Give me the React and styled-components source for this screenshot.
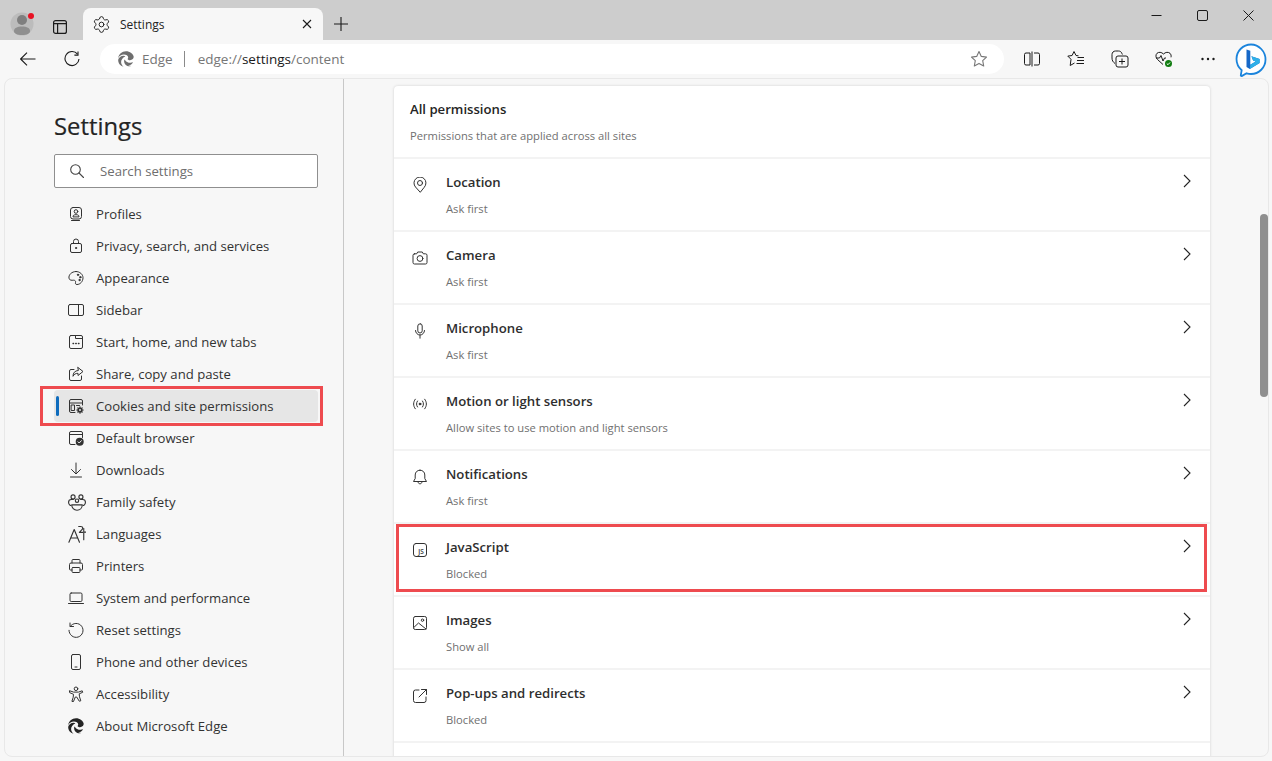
import React from 'react';
import styled, { createGlobalStyle } from 'styled-components';
import { Settings } from 'lucide-react';

const GlobalStyle = createGlobalStyle`
  html, body {
    margin: 0;
    height: 100%;
    background: #f7f7f7;
    overflow: hidden;
  }
  body {
    font-family: "Open Sans", "Noto Sans", sans-serif;
    color: #242424;
  }
  * { box-sizing: border-box; }
`;

const Svg = ({ size = 16, box = 16, sw = 1, children }) => (
  <svg width={size} height={size} viewBox={`0 0 ${box} ${box}`} fill="none" stroke="currentColor" strokeWidth={sw} strokeLinecap="round" strokeLinejoin="round">
    {children}
  </svg>
);

const EdgeLogo = ({ color, size = 16 }) => (
  <svg width={size} height={size} viewBox="0 0 16 16">
    <path fill={color} d="M8 0.3C3.9 0.3 0.6 3.3 0.2 7.2 1.2 4.9 3.5 3.6 5.9 3.6c2.2 0 4.3 1.2 4.3 3 0 .5-.2.9-.5 1.2-.3.3-.1.8.9 1.1 1.4.5 3.2.2 4.2-.8.6-.7.9-1.5.9-2.3C15.4 2.8 11.8 0.3 8 0.3z" />
    <path fill={color} d="M5.7 4.7C3 4.7.6 6.6.2 8.8c-.2 3.2 2 6.2 5.3 6.9-1.5-1.1-2.4-2.9-2.4-4.7 0-2.6 1.9-4.8 4.3-5.6C6.9 5 6.3 4.7 5.7 4.7z" />
    <path fill={color} d="M6.5 8.6c-.9 1.7-.3 4 1.3 5.3 1.3 1.1 3.5 1.7 5.2 1-1-.1-2.2-.4-2.9-.9 1.8.2 3.3-.4 4.3-1.8.3-.4.5-.8.3-1-.2-.1-.5.1-1 .2-2 .6-4.5.2-6-1.5-.5-.6-.8-1.2-1.200-1.3z" />
  </svg>
);

const icons = {
  profiles: <Svg><rect x="2.5" y="1.5" width="11" height="11.5" rx="2.5" /><circle cx="8" cy="5.5" r="1.8" /><path d="M5 10.500c0-1.300 1-1.800 3-1.800s3 .5 3 1.800z" /><path d="M3.500 14.500h8" /></Svg>,
  privacy: <Svg><rect x="2.5" y="5.5" width="11" height="9" rx="1.5" /><path d="M5.500 5.500V3.500a2.500 2.500 0 0 1 5 0v2" /><circle cx="8" cy="10" r=".6" fill="currentColor" /></Svg>,
  appearance: <Svg><path d="M8 1.500c3.800 0 7 2.800 7 6.300 0 3.600-2.800 6.700-6 6.700-1.500 0-1.800-1-1.500-2 .4-1.200-.3-2.400-2-2.300-1.700.1-4 .4-4.500-2C.4 5 3.500 1.500 8 1.500z" /><circle cx="10" cy="4.8" r=".7" fill="currentColor" /><circle cx="12.3" cy="7.2" r=".7" fill="currentColor" /><circle cx="11.5" cy="10" r=".7" fill="currentColor" /></Svg>,
  sidebar: <Svg><rect x=".5" y="2.5" width="15" height="11" rx="1.5" /><path d="M10.500 2.500v11" /></Svg>,
  start: <Svg><path d="M3 1.500h4.500v3h7V13a1.500 1.500 0 0 1-1.500 1.500H3A1.500 1.500 0 0 1 1.500 13V3A1.500 1.500 0 0 1 3 1.500zM7.500 1.500H13A1.500 1.500 0 0 1 14.500 3v1.500" /><path d="M5 9.500h.6M7.700 9.500h.6M10.400 9.500h.6" strokeWidth="1.3" /></Svg>,
  share: <Svg><path d="M13.500 10v3a1.500 1.500 0 0 1-1.500 1.500H3A1.500 1.500 0 0 1 1.500 13V5A1.500 1.500 0 0 1 3 3.500h3" /><path d="M10 1.500l5 4-5 4V7.300c-2.500 0-4 1-5 3 0-3.500 1.800-5.500 5-5.800z" /></Svg>,
  cookies: <Svg><path d="M7 14.500H3A1.500 1.500 0 0 1 1.500 13V3A1.500 1.500 0 0 1 3 1.500h10A1.500 1.500 0 0 1 14.500 3v4" /><path d="M1.500 5h13" /><rect x="3.5" y="7" width="3" height="5.5" /><path d="M8.500 7.500h3" /><circle cx="12" cy="12" r="2.6" fill="currentColor" stroke="none" /><circle cx="12" cy="12" r="1" fill="#e6e6e6" stroke="none" /><path d="M12 8.800v1M12 14.200v1M8.800 12h1M14.200 12h1M9.800 9.800l.7.700M13.500 13.500l.7.700M9.800 14.200l.7-.7M13.500 10.500l.7-.7" strokeWidth="1.2" /></Svg>,
  browser: <Svg><path d="M7 14.500H3A1.500 1.500 0 0 1 1.500 13V3A1.500 1.500 0 0 1 3 1.500h10A1.500 1.500 0 0 1 14.500 3v4.500" /><path d="M1.500 4.500h13" /><circle cx="11.7" cy="11.7" r="4" fill="currentColor" stroke="none" /><path d="M10 11.800l1.200 1.200 2.200-2.300" stroke="#f7f7f7" /></Svg>,
  downloads: <Svg><path d="M8 1v10.500M3.500 7.500L8 12l4.500-4.500M2.500 15h11" /></Svg>,
  family: <Svg size={18}><circle cx="4.5" cy="3.5" r="1.8" /><circle cx="11.5" cy="3.5" r="1.8" /><circle cx="8" cy="6.8" r="1.5" /><path d="M2.500 11H1.800C1 10.500.5 9.500.5 8.300c0-1.500 1-2.500 2.500-2.500h1.800M13.500 11h.7c.8-.5 1.300-1.500 1.300-2.700 0-1.500-1-2.500-2.500-2.500h-1.800" /><path d="M3.300 10.500h9.400c0 2.700-2 4.800-4.700 4.800S3.300 13.200 3.300 10.500z" /></Svg>,
  languages: <Svg size={18}><path d="M.8 15.300L5.500 4l4.700 11.300M2.500 11.500h6" /><path d="M9.500 1.300h1.800c1.200 0 1.800.6 1.800 1.500s-1.200 1.700-3 3.700h3" /><path d="M14 3v10M14 6.300h2" /></Svg>,
  printers: <Svg><path d="M4 5V2.500A1 1 0 0 1 5 1.500h6a1 1 0 0 1 1 1V5" /><path d="M4 12H2.500a1 1 0 0 1-1-1V6.500A1.500 1.500 0 0 1 3 5h10a1.500 1.500 0 0 1 1.500 1.500V11a1 1 0 0 1-1 1H12" /><rect x="4" y="9.5" width="8" height="5" rx="1" /></Svg>,
  system: <Svg><rect x="2" y="3" width="12" height="8.5" rx="1.2" /><path d="M.5 13.500h15" /></Svg>,
  reset: <Svg><path d="M2.300 4.300a7 7 0 1 1-1.300 4" /><path d="M2 1v3.500h3.500" /></Svg>,
  phone: <Svg><rect x="3.5" y=".5" width="9" height="15" rx="1.5" /><path d="M7 13h2" /></Svg>,
  accessibility: <Svg><circle cx="8" cy="2.8" r="1.8" /><path d="M1.800 4.800l3.800 1.300h4.800l3.800-1.300.5 1.500-3.500 1.500.3 3 1.300 4-1.500.4L8.700 11H7.300l-1.900 4.700-1.500-.4 1.300-4 .3-3-3.500-1.500z" /></Svg>,
  location: <Svg><path d="M8 15l-4.500-5A6 6 0 1 1 12.500 10z" /><circle cx="8" cy="6" r="2.5" /></Svg>,
  camera: <Svg><path d="M2.500 3.800h2.200l1-1.800h4.600l1 1.800h2.200A1.500 1.500 0 0 1 15 5.300v7.200a1.500 1.500 0 0 1-1.500 1.500h-11A1.500 1.500 0 0 1 1 12.500V5.300a1.500 1.500 0 0 1 1.500-1.500z" /><circle cx="8" cy="8.5" r="2.9" /></Svg>,
  microphone: <Svg><rect x="5.8" y=".8" width="4.4" height="9.2" rx="2.2" /><path d="M3.500 7.500a4.500 4.500 0 0 0 9 0M8 12v3.200" /></Svg>,
  motion: <Svg><circle cx="8" cy="8" r=".9" fill="currentColor" /><path d="M5.500 5c-1.300 1.800-1.300 4.200 0 6M10.500 5c1.300 1.800 1.300 4.200 0 6M3.300 3.200c-2.300 3-2.300 6.600 0 9.600M12.700 3.200c2.300 3 2.300 6.600 0 9.600" /></Svg>,
  notifications: <Svg><path d="M8 1.200c-2.900 0-4.800 2-4.800 4.800v3.500L1.500 12.500h13l-1.700-3V6c0-2.800-1.900-4.800-4.800-4.800z" /><path d="M6 12.700c0 1.300.9 2.100 2 2.100s2-.8 2-2.100" /></Svg>,
  images: <Svg><rect x="1.5" y="1.5" width="13" height="13" rx="1.8" /><circle cx="10.5" cy="5.2" r="1.2" /><path d="M1.800 12.500L6.500 8l7.500 6" /></Svg>,
  popups: <Svg><path d="M7 2H3.500A2 2 0 0 0 1.500 4v8.500a2 2 0 0 0 2 2H12a2 2 0 0 0 2-2V9" /><path d="M9.500 1.500h5v5M14.500 1.500L7 9" /></Svg>,
};

const navItems = [
  ['profiles', 'Profiles'],
  ['privacy', 'Privacy, search, and services'],
  ['appearance', 'Appearance'],
  ['sidebar', 'Sidebar'],
  ['start', 'Start, home, and new tabs'],
  ['share', 'Share, copy and paste'],
  ['cookies', 'Cookies and site permissions'],
  ['browser', 'Default browser'],
  ['downloads', 'Downloads'],
  ['family', 'Family safety'],
  ['languages', 'Languages'],
  ['printers', 'Printers'],
  ['system', 'System and performance'],
  ['reset', 'Reset settings'],
  ['phone', 'Phone and other devices'],
  ['accessibility', 'Accessibility'],
  ['edge', 'About Microsoft Edge'],
];

const permissions = [
  ['location', 'Location', 'Ask first'],
  ['camera', 'Camera', 'Ask first'],
  ['microphone', 'Microphone', 'Ask first'],
  ['motion', 'Motion or light sensors', 'Allow sites to use motion and light sensors'],
  ['notifications', 'Notifications', 'Ask first'],
  ['js', 'JavaScript', 'Blocked'],
  ['images', 'Images', 'Show all'],
  ['popups', 'Pop-ups and redirects', 'Blocked'],
];

const App = () => (
  <Page>
    <GlobalStyle />
    <TitleBar>
      <Profile>
        <svg width="24" height="26" viewBox="0 0 24 26">
          <circle cx="12" cy="14" r="11.5" fill="#bcbcbc" />
          <circle cx="12" cy="10" r="5" fill="#7f7f7f" />
          <path d="M4 21c0-3 3-4.500 8-4.500s8 1.500 8 4.500c0 2.500-3 4-8 4s-8-1.500-8-4z" fill="#8f8f8f" />
          <circle cx="21" cy="6" r="3" fill="#e81123" />
        </svg>
      </Profile>
      <TabActions>
        <svg width="14" height="14" viewBox="0 0 14 14" fill="none" stroke="#1a1a1a" strokeWidth="1.2">
          <rect x=".6" y=".6" width="12.8" height="12.8" rx="2" />
          <path d="M.6 3.600h12.800M4.600 3.600v9.800" />
        </svg>
      </TabActions>
      <Tab>
        <TabIcon>
          <Settings size={19} strokeWidth={1.25} color="#242424" />
        </TabIcon>
        <TabTitle>Settings</TabTitle>
        <svg width="10" height="10" viewBox="0 0 10 10" stroke="#1a1a1a" strokeWidth="1.1">
          <path d="M1 1l8 8M9 1l-8 8" />
        </svg>
      </Tab>
      <NewTab>
        <svg width="14" height="14" viewBox="0 0 14 14" stroke="#1a1a1a" strokeWidth="1.1">
          <path d="M7 0v14M0 7h14" />
        </svg>
      </NewTab>
      <WindowControls>
        <WindowButton>
          <svg width="11" height="11" viewBox="0 0 11 11" stroke="#1a1a1a"><path d="M.5 5.500h10" /></svg>
        </WindowButton>
        <WindowButton>
          <svg width="11" height="11" viewBox="0 0 11 11" fill="none" stroke="#1a1a1a"><rect x=".5" y=".5" width="10" height="10" rx="1.5" /></svg>
        </WindowButton>
        <WindowButton>
          <svg width="11" height="11" viewBox="0 0 11 11" stroke="#1a1a1a"><path d="M.5.500l10 10M10.500.500l-10 10" /></svg>
        </WindowButton>
      </WindowControls>
    </TitleBar>

    <Toolbar>
      <NavButton>
        <svg width="16" height="14" viewBox="0 0 16 14" fill="none" stroke="#1a1a1a" strokeWidth="1.1">
          <path d="M.5 7h15M7 .6L.6 7 7 13.400" />
        </svg>
      </NavButton>
      <NavButton>
        <svg width="16" height="16" viewBox="0 0 16 16" fill="none" stroke="#1a1a1a" strokeWidth="1.1">
          <path d="M13.500 3.200A7 7 0 1 0 15 8" />
          <path d="M14 .5v3.600h-3.600" />
        </svg>
      </NavButton>
      <Address>
        <EdgeLogo color="#6e6e6e" />
        <AddressLabel>Edge</AddressLabel>
        <AddressDivider />
        <Url>edge://<strong>settings</strong>/content</Url>
        <AddressStar>
          <svg width="18" height="18" viewBox="0 0 18 18" fill="none" stroke="#777" strokeWidth="1.1" strokeLinejoin="round">
            <path d="M9 1.500l2.300 4.900 5.200.7-3.800 3.600 1 5.300L9 13.400 4.300 16l1-5.300L1.500 7.100l5.200-.7z" />
          </svg>
        </AddressStar>
      </Address>
      <ToolIcons>
        <ToolButton>
          <svg width="16" height="16" viewBox="0 0 16 16" fill="none" stroke="#1a1a1a">
            <path d="M6 2H2A1.500 1.500 0 0 0 .5 3.500v9A1.500 1.500 0 0 0 2 14h4zM10 2h4a1.500 1.500 0 0 1 1.500 1.500v9A1.500 1.500 0 0 1 14 14h-4" />
            <path d="M8 .5v15" />
          </svg>
        </ToolButton>
        <ToolButton>
          <svg width="18" height="18" viewBox="0 0 18 18" fill="none" stroke="#1a1a1a" strokeLinejoin="round">
            <path d="M11.500 5.800L9 5.500 7 1.500 5.100 5.500.8 6.100 4 9.300 3.200 15.500l4.300-2.500" />
            <path d="M10.500 7.500h6.500M10 10.500h7M9.500 13.500h7.500" />
          </svg>
        </ToolButton>
        <ToolButton>
          <svg width="18" height="18" viewBox="0 0 18 18" fill="none" stroke="#1a1a1a">
            <path d="M4 13.500C2 12 1 10.500 1 8V4.500C1 2.500 2.500 1 4.500 1h3c1.500 0 2.800.8 3.300 2.200l.6 1.300" />
            <rect x="5" y="6" width="12" height="11" rx="2" fill="#f7f7f7" />
            <path d="M11 8.500v6M8 11.500h6" />
          </svg>
        </ToolButton>
        <ToolButton>
          <svg width="18" height="18" viewBox="0 0 18 18" fill="none" stroke="#1a1a1a">
            <path d="M8 14.500L2.500 9.500C.5 7.500.5 4.800 2 3.300c1.700-1.500 4.500-1.300 6.500.7 2-2 4.800-2.200 6.500-.7 1 1 1.400 2.500 1 4" />
            <path d="M1 8h3.500l1.500-2.500 2 5.500 1.500-3h1.500" />
            <circle cx="13.5" cy="13.5" r="3.5" fill="#107c10" stroke="none" />
            <path d="M11.800 13.600l1.200 1.100 2-2.200" stroke="#fff" />
          </svg>
        </ToolButton>
        <ToolButton>
          <svg width="16" height="4" viewBox="0 0 16 4" fill="#1a1a1a">
            <circle cx="2.5" cy="2" r="1.2" /><circle cx="8" cy="2" r="1.2" /><circle cx="13.5" cy="2" r="1.2" />
          </svg>
        </ToolButton>
      </ToolIcons>
      <Bing>
        <svg width="32" height="34" viewBox="0 0 32 34">
          <path d="M16 1.500C8 1.500 1.500 8 1.500 16c0 4.500 2 8.500 5.200 11.200l-.9 5c-.1.800.7 1 1.300.7l4.500-2.600c1.400.4 2.900.7 4.400.7 8 0 14.500-6.500 14.500-14.500S24 1.500 16 1.500z" fill="#fff" stroke="#1b84dc" strokeWidth="1.8" />
          <path d="M11.500 6.500l3.800 1.300v14l5.400-3.200-2.600-1.200-1.700-4.200 8.200 2.900v4l-9.800 5.800-3.300-1.900z" fill="#1668c8" />
          <path d="M15.300 21.800l5.400-3.200-2.600-1.200-1.700-4.200 8.200 2.900v4l-9.800 5.800z" fill="#2fb0e8" />
        </svg>
      </Bing>
    </Toolbar>

    <Panel>
      <Sidebar>
        <SidebarTitle>Settings</SidebarTitle>
        <SearchBox>
          <svg width="16" height="16" viewBox="0 0 16 16" fill="none" stroke="#444" strokeWidth="1.1" strokeLinecap="round">
            <circle cx="6.5" cy="6.5" r="4.8" /><path d="M10 10l4.500 4.500" />
          </svg>
          <SearchPlaceholder>Search settings</SearchPlaceholder>
        </SearchBox>
        <Nav>
          {navItems.map(([key, label]) => (
            <NavItem key={key} $active={key === 'cookies'}>
              <NavIcon>{key === 'edge' ? <EdgeLogo color="#242424" /> : icons[key]}</NavIcon>
              {label}
            </NavItem>
          ))}
        </Nav>
      </Sidebar>

      <Main>
        <Card>
          <CardHeader>
            <CardTitle>All permissions</CardTitle>
            <CardSubtitle>Permissions that are applied across all sites</CardSubtitle>
          </CardHeader>
          {permissions.map(([key, title, desc]) => (
            <Row key={key} $marked={key === 'js'}>
              <RowIcon>
                {key === 'js' ? (
                  <Svg>
                    <rect x="1.5" y="1.5" width="13" height="13" rx="2.5" />
                    <JsMark x="11.8" y="12" textAnchor="end">JS</JsMark>
                  </Svg>
                ) : icons[key]}
              </RowIcon>
              <RowText>
                <RowTitle>{title}</RowTitle>
                <RowDesc>{desc}</RowDesc>
              </RowText>
              <Chevron>
                <svg width="8" height="14" viewBox="0 0 8 14" fill="none" stroke="#242424" strokeWidth="1.1">
                  <path d="M1 1l6 6-6 6" />
                </svg>
              </Chevron>
            </Row>
          ))}
          <Row />
        </Card>
      </Main>
      <ScrollTrack>
        <ScrollThumb />
      </ScrollTrack>
    </Panel>
  </Page>
);

const Page = styled.div`
  display: flex;
  flex-direction: column;
  height: 761px;
  overflow: hidden;
`;

const TitleBar = styled.div`
  display: flex;
  align-items: flex-end;
  height: 40px;
  flex: none;
  background: #cdcdcd;
`;

const Profile = styled.div`
  width: 46px;
  height: 40px;
  padding: 10px 0 0 10px;
`;

const TabActions = styled.div`
  width: 37px;
  height: 40px;
  padding: 17px 0 0 7px;
`;

const Tab = styled.div`
  display: flex;
  align-items: center;
  width: 240px;
  height: 32px;
  padding: 0 11px 0 9px;
  background: #f7f7f7;
  border-radius: 8px 8px 0 0;
`;

const TabIcon = styled.span`
  display: flex;
  margin-right: 9px;
`;

const TabTitle = styled.span`
  flex: 1;
  font-size: 12px;
`;

const NewTab = styled.div`
  display: flex;
  align-items: center;
  height: 40px;
  padding: 8px 0 0 11px;
`;

const WindowControls = styled.div`
  display: flex;
  height: 40px;
  margin-left: auto;
  margin-right: 1px;
`;

const WindowButton = styled.div`
  display: flex;
  align-items: center;
  justify-content: center;
  width: 46px;
  height: 30px;
`;

const Toolbar = styled.div`
  display: flex;
  align-items: center;
  height: 38px;
  flex: none;
  padding: 0 5px 0 8px;
  background: #f7f7f7;
`;

const NavButton = styled.div`
  display: flex;
  align-items: center;
  justify-content: center;
  width: 40px;
  height: 30px;
  &:nth-child(2) { margin-left: 4px; }
`;

const Address = styled.div`
  display: flex;
  align-items: center;
  flex: 1;
  height: 30px;
  margin-left: 8px;
  padding: 0 16px 0 18px;
  background: #fff;
  border-radius: 15px;
  font-size: 13.5px;
  color: #767676;
`;

const AddressLabel = styled.span`
  margin-left: 8px;
`;

const AddressDivider = styled.span`
  width: 1px;
  height: 16px;
  margin: 0 13px 0 11px;
  background: #8a8a8a;
`;

const Url = styled.span`
  flex: 1;
  strong {
    font-weight: 400;
    color: #1a1a1a;
  }
`;

const AddressStar = styled.span`
  display: flex;
`;

const ToolIcons = styled.div`
  display: flex;
  margin-left: 6px;
`;

const ToolButton = styled.div`
  display: flex;
  align-items: center;
  justify-content: center;
  width: 44px;
  height: 30px;
`;

const Bing = styled.div`
  display: flex;
  margin: 2px 0 0 5px;
`;

const Panel = styled.div`
  display: flex;
  flex: 1;
  min-height: 0;
  margin: 0 3px 4px 4px;
  background: #f7f7f7;
  border: 1px solid #e8e8e8;
  border-radius: 8px;
  overflow: hidden;
`;

const Sidebar = styled.aside`
  flex: none;
  width: 339px;
  padding: 0 25px 0 49px;
  border-right: 1px solid #c8c8c8;
`;

const SidebarTitle = styled.h1`
  margin: 29px 0 10px;
  font-size: 23.8px;
  font-weight: 400;
  line-height: 36px;
  color: #242424;
  -webkit-text-stroke: 0.2px #242424;
`;

const SearchBox = styled.div`
  display: flex;
  align-items: center;
  height: 34px;
  padding: 0 14px;
  background: #fff;
  border: 1px solid #8f8f8f;
  border-radius: 2px;
`;

const SearchPlaceholder = styled.span`
  margin-left: 15px;
  font-size: 13.2px;
  color: #6e6e6e;
`;

const Nav = styled.nav`
  margin-top: 10px;
`;

const NavItem = styled.div`
  position: relative;
  display: flex;
  align-items: center;
  height: 32px;
  padding-left: 42px;
  font-size: 13.15px;
  color: #323232;
  background: ${(p) => (p.$active ? '#e6e6e6' : 'transparent')};
  border-radius: 4px;

  ${(p) => p.$active && `
    &::before {
      content: '';
      position: absolute;
      left: 2px;
      top: 6px;
      width: 3px;
      height: 20px;
      background: #0f6cbd;
      border-radius: 2px;
    }
    &::after {
      content: '';
      position: absolute;
      inset: -4px -5px -4px -14px;
      border: 3px solid #ee4b4f;
    }
  `}
`;

const NavIcon = styled.span`
  position: absolute;
  left: 14px;
  top: 0;
  bottom: 0;
  display: flex;
  align-items: center;
  color: #323232;
`;

const Main = styled.main`
  flex: 1;
  min-width: 0;
  padding: 7px 50px 0 50px;
`;

const Card = styled.section`
  background: #fff;
  border-radius: 4px 4px 0 0;
  box-shadow: 0 0 3px rgba(0, 0, 0, 0.16);
`;

const CardHeader = styled.header`
  height: 73px;
  padding: 13px 16px 0;
  border-bottom: 2px solid #f3f3f3;
`;

const CardTitle = styled.div`
  font-size: 13.15px;
  font-weight: 600;
  line-height: 20px;
`;

const CardSubtitle = styled.div`
  margin-top: 9px;
  font-size: 11.2px;
  line-height: 16px;
  color: #707070;
`;

const Row = styled.div`
  position: relative;
  display: flex;
  height: 73px;
  padding: 13px 16px 0;
  border-bottom: 2px solid #f3f3f3;

  ${(p) => p.$marked && `
    &::after {
      content: '';
      position: absolute;
      inset: 0 3px 3px 2px;
      border: 3px solid #ee4b4f;
    }
  `}
`;

const RowIcon = styled.div`
  display: flex;
  align-items: center;
  width: 36px;
  height: 20px;
  padding: 6px 0 0 2px;
  color: #323232;
`;

const JsMark = styled.text`
  font-family: "Open Sans", sans-serif;
  font-size: 6.5px;
  font-weight: 600;
  fill: currentColor;
  stroke: none;
`;

const RowText = styled.div`
  flex: 1;
`;

const RowTitle = styled.div`
  font-size: 13.2px;
  font-weight: 600;
  line-height: 20px;
  color: #2e2e2e;
`;

const RowDesc = styled.div`
  margin-top: 9px;
  font-size: 11.2px;
  line-height: 16px;
  color: #707070;
`;

const Chevron = styled.div`
  display: flex;
  margin: 2px 3px 0 0;
`;

const ScrollTrack = styled.div`
  flex: none;
  width: 8px;
  padding-top: 135px;
`;

const ScrollThumb = styled.div`
  width: 8px;
  height: 183px;
  background: #8f8f8f;
  border-radius: 4px;
`;

export default App;
